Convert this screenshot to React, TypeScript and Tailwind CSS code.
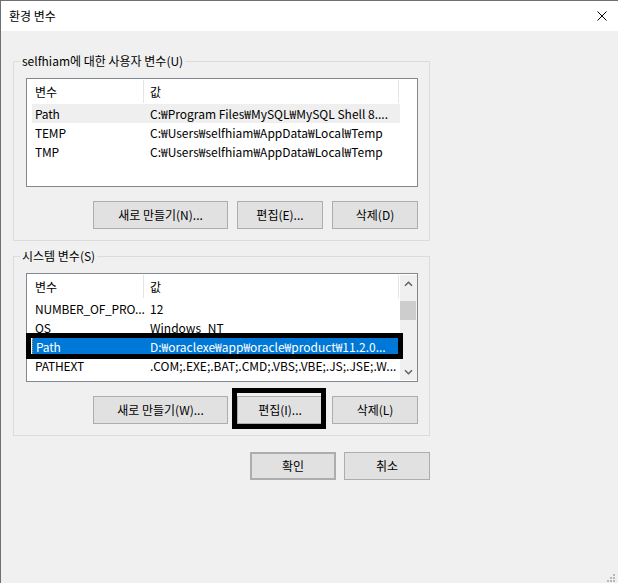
import React from 'react';

type Row = { name: string; value: string; state?: 'soft' | 'selected' };

const userRows: Row[] = [
  { name: 'Path', value: 'C:₩Program Files₩MySQL₩MySQL Shell 8....', state: 'soft' },
  { name: 'TEMP', value: 'C:₩Users₩selfhiam₩AppData₩Local₩Temp' },
  { name: 'TMP', value: 'C:₩Users₩selfhiam₩AppData₩Local₩Temp' },
];

const systemRows: Row[] = [
  { name: 'NUMBER_OF_PRO...', value: '12' },
  { name: 'OS', value: 'Windows_NT' },
  { name: 'Path', value: 'D:₩oraclexe₩app₩oracle₩product₩11.2.0...', state: 'selected' },
  { name: 'PATHEXT', value: '.COM;.EXE;.BAT;.CMD;.VBS;.VBE;.JS;.JSE;.W...' },
];

function Chevron({ down }: { down?: boolean }) {
  return (
    <svg width="9" height="6" viewBox="0 0 9 6" className="block">
      <path
        d={down ? 'M1 1.2 L4.5 4.7 L8 1.2' : 'M1 4.8 L4.5 1.3 L8 4.8'}
        fill="none"
        stroke="#606060"
        strokeWidth="1.5"
      />
    </svg>
  );
}

function Scrollbar() {
  return (
    <div className="my-[1px] flex w-[17px] flex-col bg-[#f0f0f0]">
      <div className="flex h-[17px] items-center justify-center">
        <Chevron />
      </div>
      <div className="mt-[9px] h-[19px] w-[16px] bg-[#cdcdcd]" />
      <div className="flex-1" />
      <div className="flex h-[17px] items-center justify-center">
        <Chevron down />
      </div>
    </div>
  );
}

function VarList({ rows, scroll, children }: { rows: Row[]; scroll?: boolean; children?: React.ReactNode }) {
  return (
    <div className="relative flex h-[109px] w-[392px] border border-[#828790] bg-white">
      <div className="w-[373px] pl-[5px]">
        <div className="flex h-[25px] items-center">
          <div className="flex h-[23px] w-[112px] items-center border-r border-[#e5e5e5] pl-[3px]">변수</div>
          <div className="flex h-[23px] w-[255px] items-center border-r border-[#e5e5e5] pl-[6px]">값</div>
        </div>
        {rows.map((r) => (
          <div
            key={r.name + r.value}
            className={
              'flex h-[19px] items-center whitespace-nowrap ' +
              (r.state === 'selected'
                ? 'bg-[#0078d7] text-white'
                : r.state === 'soft'
                  ? 'bg-[#efefef]'
                  : '')
            }
          >
            <div
              className={
                'w-[112px] shrink-0 pl-[3px] tracking-[-0.2px] ' +
                (r.state === 'selected' ? 'border-l border-dotted border-[#e08a3c]' : '')
              }
            >
              {r.name}
            </div>
            <div className="w-[255px] shrink-0 overflow-hidden pl-[6px]">{r.value}</div>
          </div>
        ))}
      </div>
      <div className="w-[0px] flex-1" />
      {scroll && <Scrollbar />}
      {children}
    </div>
  );
}

function Btn({ children, className = '' }: { children: React.ReactNode; className?: string }) {
  return (
    <div
      className={
        'flex h-[28px] items-center justify-center border border-[#adadad] bg-[#e1e1e1] ' + className
      }
    >
      {children}
    </div>
  );
}

function Group({ label, children }: { label: string; children: React.ReactNode }) {
  return (
    <fieldset className="m-0 w-[417px] min-w-0 border border-[#dcdcdc] p-0">
      <legend className="ml-[6px] px-[2px] leading-[16px]">{label}</legend>
      <div className="pt-[9px] pr-[11px] pb-[11px] pl-[12px]">{children}</div>
    </fieldset>
  );
}

export default function App() {
  return (
    <div className="relative flex h-[583px] w-[618px] flex-col border-t border-l border-[#707070] bg-[#f0f0f0] font-['Noto_Sans_CJK_KR',sans-serif] text-[12px] text-black">
      <div className="flex h-[30px] items-center justify-between bg-white pr-[11px] pl-[8px]">
        <span>환경 변수</span>
        <svg width="10" height="10" viewBox="0 0 10 10">
          <path d="M0.5 0.5 L9.5 9.5 M9.5 0.5 L0.5 9.5" stroke="#000" strokeWidth="1" />
        </svg>
      </div>

      <div className="flex flex-col pl-[12px]">
        <div className="mt-[22px]">
          <Group label="selfhiam에 대한 사용자 변수(U)">
            <VarList rows={userRows} />
            <div className="mt-[14px] flex justify-end gap-[9px]">
              <Btn className="w-[135px]">새로 만들기(N)...</Btn>
              <Btn className="w-[86px]">편집(E)...</Btn>
              <Btn className="w-[86px]">삭제(D)</Btn>
            </div>
          </Group>
        </div>

        <div className="mt-[7px]">
          <Group label="시스템 변수(S)">
            <VarList rows={systemRows} scroll>
              <div className="absolute top-[59px] left-[-1px] h-[26px] w-[377px] border-[5px] border-black" />
            </VarList>
            <div className="mt-[14px] flex justify-end gap-[9px]">
              <Btn className="w-[135px]">새로 만들기(W)...</Btn>
              <div className="relative">
                <Btn className="w-[86px]">편집(I)...</Btn>
                <div className="absolute top-[-8px] left-[-5px] h-[41px] w-[94px] border-[5px] border-black" />
              </div>
              <Btn className="w-[86px]">삭제(L)</Btn>
            </div>
          </Group>
        </div>

        <div className="mt-[16px] flex w-[417px] justify-end gap-[8px]">
          <Btn className="w-[86px] border-2 border-[#0078d7]">확인</Btn>
          <Btn className="w-[86px]">취소</Btn>
        </div>
      </div>

      <svg className="absolute right-[3px] bottom-[1px]" width="8" height="8" viewBox="0 0 8 8">
        <rect x="6" y="0" width="2" height="2" fill="#b8b8b8" />
        <rect x="3" y="3" width="2" height="2" fill="#b8b8b8" />
        <rect x="6" y="3" width="2" height="2" fill="#b8b8b8" />
        <rect x="0" y="6" width="2" height="2" fill="#b8b8b8" />
        <rect x="3" y="6" width="2" height="2" fill="#b8b8b8" />
        <rect x="6" y="6" width="2" height="2" fill="#b8b8b8" />
      </svg>
    </div>
  );
}
